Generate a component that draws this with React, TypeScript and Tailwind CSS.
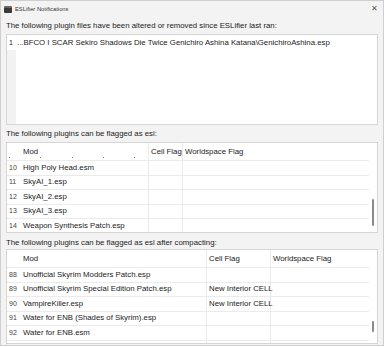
import React from "react";

const font = { fontFamily: '"Liberation Sans", Arial, sans-serif' };

type Row = { n: number; mod: string; cell?: string; world?: string };

const esl: Row[] = [
  { n: 10, mod: "High Poly Head.esm" },
  { n: 11, mod: "SkyAI_1.esp" },
  { n: 12, mod: "SkyAI_2.esp" },
  { n: 13, mod: "SkyAI_3.esp" },
  { n: 14, mod: "Weapon Synthesis Patch.esp" },
];

const compact: Row[] = [
  { n: 88, mod: "Unofficial Skyrim Modders Patch.esp" },
  { n: 89, mod: "Unofficial Skyrim Special Edition Patch.esp", cell: "New Interior CELL" },
  { n: 90, mod: "VampireKiller.esp", cell: "New Interior CELL" },
  { n: 91, mod: "Water for ENB (Shades of Skyrim).esp" },
  { n: 92, mod: "Water for ENB.esm" },
  { n: 93, mod: "Water for ENB - Shades of Skyrim Patch.esp" },
];

function Table({
  rows,
  modW,
  cellW,
  height,
  thumbTop,
  thumbH,
  ghost,
}: {
  rows: Row[];
  modW: string;
  cellW: string;
  height: string;
  thumbTop: string;
  thumbH: string;
  ghost?: boolean;
}) {
  return (
    <div className={`relative ${height} overflow-hidden border border-[#d6d6d6] bg-white`}>
      <div className="w-[362px]">
        {/* header */}
        <div className="relative flex h-[18px] items-center border-b border-[#ebebeb] text-[7.8px] whitespace-nowrap text-[#1b1b1b]">
          <div className="w-[15px] shrink-0" />
          <div className={`${modW} flex shrink-0 items-center self-stretch border-r border-[#ebebeb] pl-[1px]`}>Mod</div>
          <div className={`${cellW} flex shrink-0 items-center self-stretch border-r border-[#ebebeb] pl-[2px]`}>Cell Flag</div>
          <div className="flex-1 pl-[2px]">Worldspace Flag</div>
          {ghost && (
            <div className="absolute bottom-[2px] left-0 flex w-[130px] justify-between px-[2px]">
              <span className="h-[1px] w-[1px] bg-[#777]" />
              <span className="h-[1px] w-[1px] bg-[#777]" />
              <span className="h-[1px] w-[1px] bg-[#777]" />
              <span className="h-[1px] w-[1px] bg-[#777]" />
              <span className="h-[1px] w-[1px] bg-[#777]" />
            </div>
          )}
        </div>
        {rows.map((r) => (
          <div key={r.n} className="flex h-[14.5px] items-center border-b border-[#ebebeb] text-[7.8px] whitespace-nowrap text-[#1b1b1b]">
            <div className="w-[15px] shrink-0 pl-[2px] text-[7px] text-[#444]">{r.n}</div>
            <div className={`${modW} flex shrink-0 items-center self-stretch border-r border-[#ebebeb] pl-[1px]`}>{r.mod}</div>
            <div className={`${cellW} flex shrink-0 items-center self-stretch border-r border-[#ebebeb] pl-[2px]`}>{r.cell ?? ""}</div>
            <div className="flex-1 pl-[2px]">{r.world ?? ""}</div>
          </div>
        ))}
      </div>
      {/* scrollbar */}
      <div className={`absolute right-[3px] ${thumbTop} ${thumbH} w-[2px] rounded-full bg-[#8a8a8a]`} />
    </div>
  );
}

export default function App() {
  return (
    <div className="h-[347px] w-[385px] bg-white" style={font}>
      <div className="flex h-[346px] w-[384px] flex-col border border-[#cfcfcf] bg-[#f3f3f3]">
        {/* title bar */}
        <div className="flex h-[16px] shrink-0 items-center px-[3px]">
          <div className="h-[7px] w-[8px] rounded-[1px] border-t-2 border-[#666] bg-[#3a3a3a]" />
          <span className="ml-[3px] text-[5.8px] text-[#333]">ESLifier Notifications</span>
          <span className="ml-auto mr-[2px] text-[8px] leading-none text-[#555]">✕</span>
        </div>

        <div className="flex flex-1 flex-col px-[5px]">
          <div className="flex h-[17px] items-end pb-[3px] text-[7.8px] leading-[10px] text-[#1b1b1b]">
            The following plugin files have been altered or removed since ESLifier last ran:
          </div>
          <div className="flex h-[91px] border border-[#d6d6d6] bg-white">
            <div className="flex w-[9px] shrink-0 flex-col bg-[#f2f2f2]">
              <div className="h-[15px] bg-white pl-[2px] text-[7px] leading-[15px] text-[#222]">1</div>
            </div>
            <div className="flex h-[15px] items-center pl-[1px] text-[7.8px] whitespace-nowrap text-[#1b1b1b]">
              ...BFCO I SCAR Sekiro Shadows Die Twice Genichiro Ashina Katana\GenichiroAshina.esp
            </div>
          </div>

          <div className="flex h-[17px] items-end pb-[3px] text-[7.8px] leading-[10px] text-[#1b1b1b]">
            The following plugins can be flagged as esl:
          </div>
          <Table rows={esl} modW="w-[127px]" cellW="w-[34px]" height="h-[91px]" thumbTop="top-[56px]" thumbH="h-[27px]" ghost />

          <div className="flex h-[16px] items-end pb-[1px] text-[7.8px] leading-[10px] text-[#1b1b1b]">
            The following plugins can be flagged as esl after compacting:
          </div>
          <Table rows={compact} modW="w-[185px]" cellW="w-[64px]" height="h-[95px]" thumbTop="top-[71px]" thumbH="h-[11px]" />
        </div>
      </div>
    </div>
  );
}
